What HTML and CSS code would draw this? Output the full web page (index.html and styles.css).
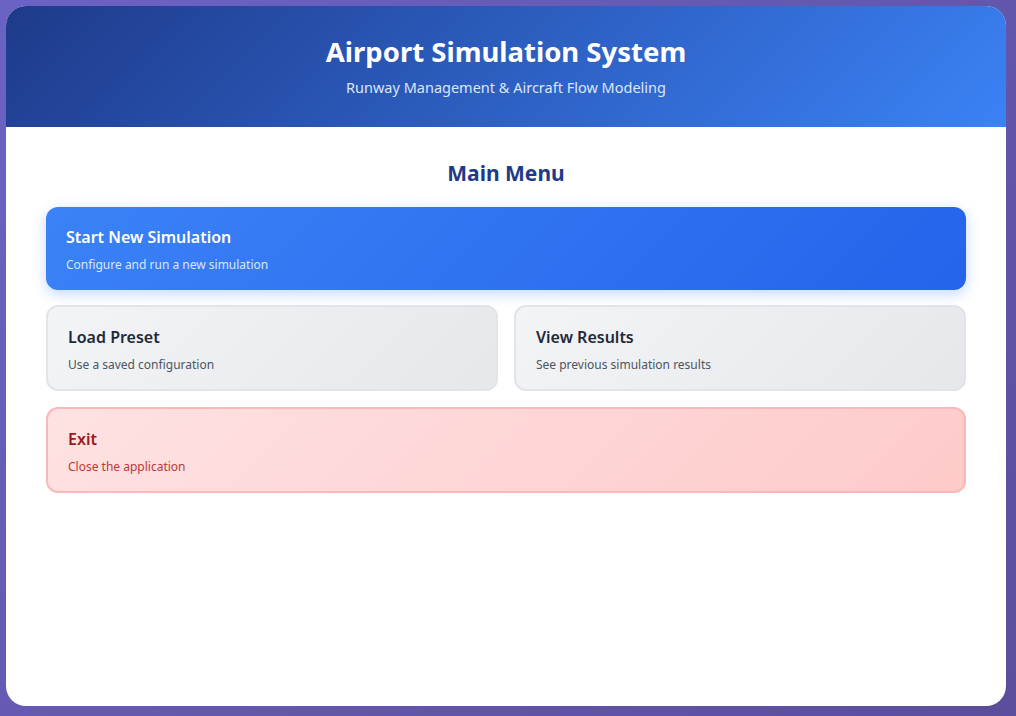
FILE: index.html
```html
<!DOCTYPE html>
<html lang="en">
<head>
  <meta charset="UTF-8" />
  <title>Airport Simulation System</title>
  <link rel="stylesheet" href="styles.css">
</head>
<body>
  <div class="app">
    <header class="app-header">
      <h1>Airport Simulation System</h1>
      <p>Runway Management &amp; Aircraft Flow Modeling</p>
    </header>

    <main class="menu">
      <h2>Main Menu</h2>

      <button class="menu-item primary">
        <span class="item-title">Start New Simulation</span>
        <span class="item-desc">Configure and run a new simulation</span>
      </button>

      <div class="menu-row">
        <button class="menu-item">
          <span class="item-title">Load Preset</span>
          <span class="item-desc">Use a saved configuration</span>
        </button>
        <button class="menu-item">
          <span class="item-title">View Results</span>
          <span class="item-desc">See previous simulation results</span>
        </button>
      </div>

      <button class="menu-item danger">
        <span class="item-title">Exit</span>
        <span class="item-desc">Close the application</span>
      </button>
    </main>
  </div>
</body>
</html>
```

FILE: styles.css
```css
* {
  box-sizing: border-box;
}
html, body {
  height: 100%;
}
body {
  margin: 0;
  padding: 6px 10px 10px 6px;
  font-family: "Noto Sans", "Open Sans", Arial, sans-serif;
  background: linear-gradient(135deg, #6b63c4 0%, #5c4d9c 100%);
}
.app {
  width: 1000px;
  height: 700px;
  background: #fff;
  border-radius: 20px;
  overflow: hidden;
}
.app-header {
  height: 121px;
  padding-top: 28px;
  text-align: center;
  color: #fff;
  background: linear-gradient(135deg, #1e3a8a 0%, #3b82f6 100%);
}
.app-header h1 {
  margin: 0;
  font-size: 27.5px;
  line-height: 36px;
  font-weight: 700;
}
.app-header p {
  margin: 7px 0 0;
  font-size: 14.5px;
  line-height: 20px;
  color: #dbe6fb;
}
.menu {
  padding: 31px 40px;
  display: flex;
  flex-direction: column;
  gap: 16px;
}
.menu h2 {
  margin: 0 0 3px;
  text-align: center;
  font-size: 21px;
  line-height: 30px;
  font-weight: 700;
  color: #1e3a8a;
}
.menu-row {
  display: grid;
  grid-template-columns: 1fr 1fr;
  gap: 16px;
  margin-top: -1px;
}
.menu-item {
  display: flex;
  flex-direction: column;
  gap: 9px;
  text-align: left;
  font-family: inherit;
  padding: 20px 20px 15px;
  border: 2px solid #e2e4e9;
  border-radius: 12px;
  background: linear-gradient(135deg, #f3f4f6 0%, #e5e7eb 100%);
  cursor: pointer;
}
.item-title {
  font-size: 16px;
  line-height: 20px;
  font-weight: 600;
  color: #1f2937;
}
.item-desc {
  font-size: 12px;
  line-height: 18px;
  color: #4b5563;
}
.menu-item.primary {
  border: none;
  padding: 20px 20px 16px;
  background: linear-gradient(135deg, #3b82f6 0%, #2563eb 100%);
  box-shadow: 0 4px 14px rgba(59, 130, 246, 0.3);
}
.primary .item-title {
  color: #fff;
}
.primary .item-desc {
  color: #dbe7fd;
}
.menu-item.danger {
  border-color: #fcb8b8;
  background: linear-gradient(135deg, #fee2e2 0%, #fecaca 100%);
}
.danger .item-title {
  color: #991b1b;
}
.danger .item-desc {
  color: #b93a3a;
}
```
